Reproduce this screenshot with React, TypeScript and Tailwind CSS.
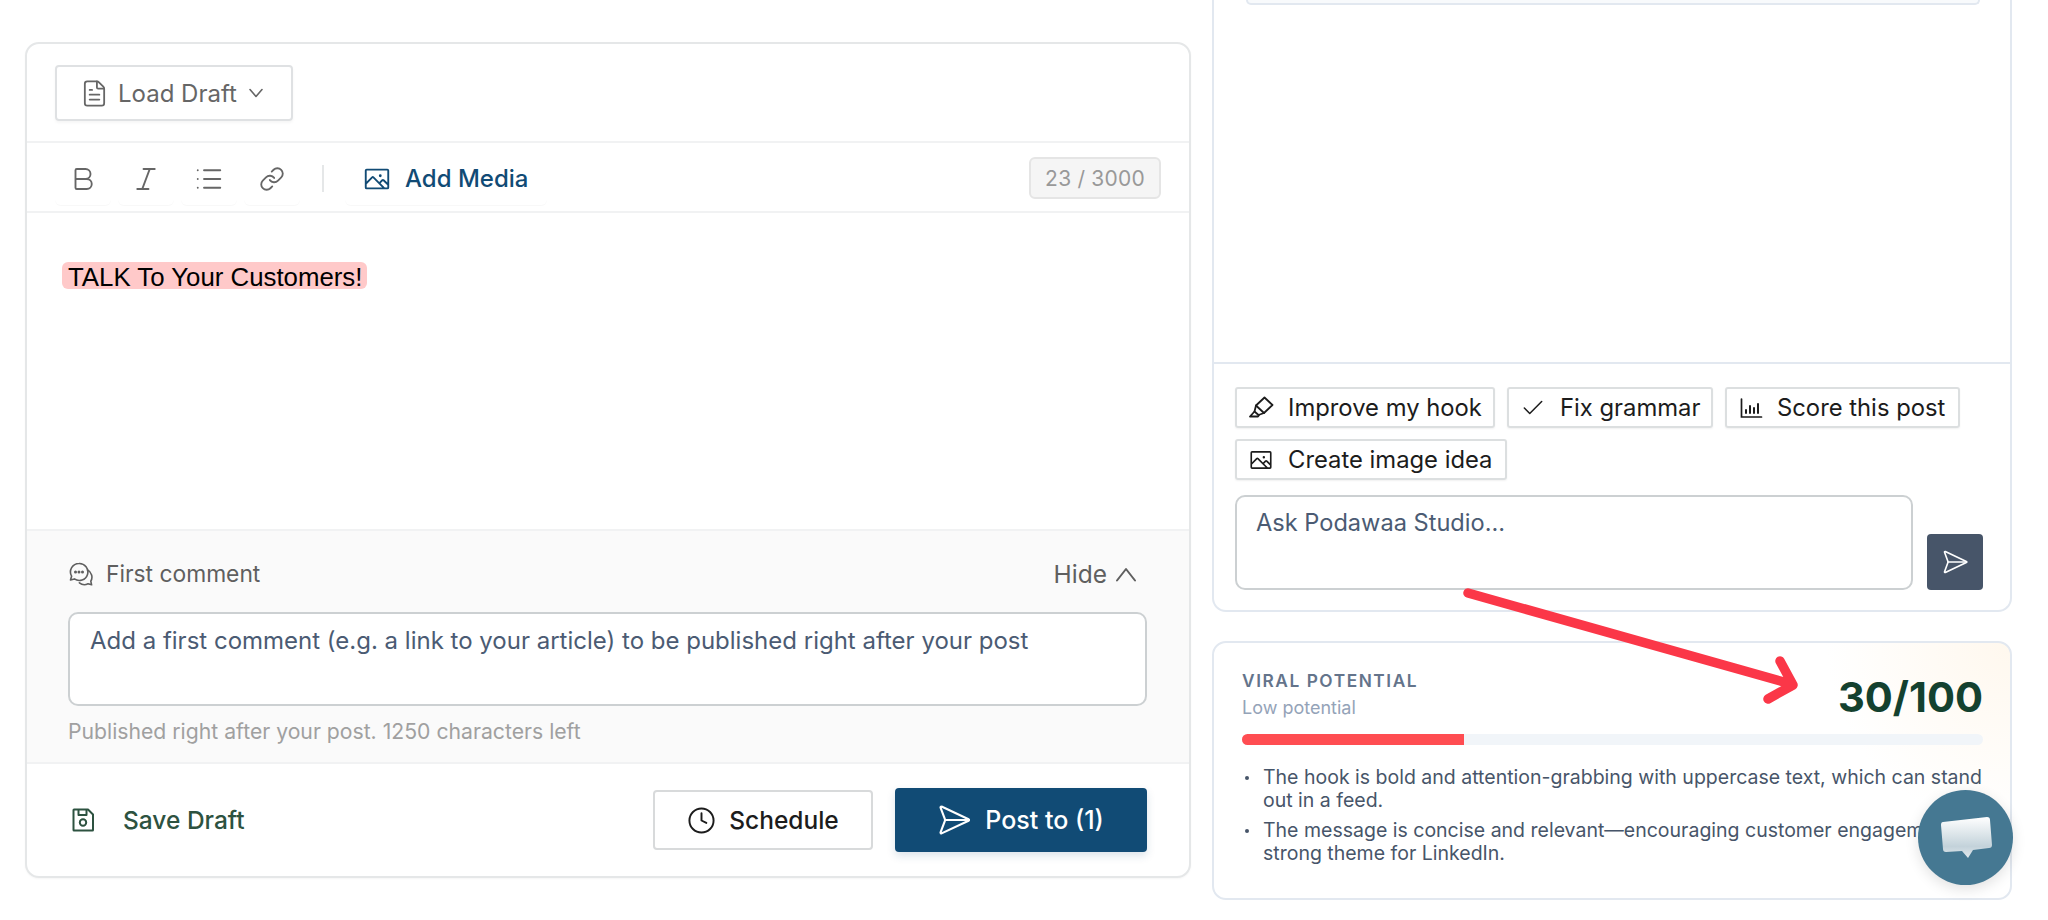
import { Bold, Check, Clock, FileText, Italic, Link, List, SendHorizontal } from "lucide-react";
import { PiImage } from "react-icons/pi";

function MarkerIcon() {
  return (
    <svg width="25" height="24" viewBox="0 0 25 24" fill="none" stroke="currentColor" strokeWidth="1.8" strokeLinecap="round" strokeLinejoin="round">
      <path d="M15.5 1.5 23.5 9l-8.5 8-8-7.5Z" />
      <path d="M7 9.5 5.5 15.5 9.5 19 15 17" />
      <path d="M5.5 15.5 1 20.5h8l1-1.5" />
    </svg>
  );
}

function ScoreIcon() {
  return (
    <svg width="24" height="24" viewBox="0 0 24 24" fill="none" stroke="currentColor" strokeWidth="1.7" strokeLinecap="round">
      <path d="M2.5 3v18h20" />
      <path d="M7 17v-3M11 17v-7M15 17v-5M19 17V8" strokeWidth="2" />
    </svg>
  );
}

function ChatsIcon() {
  return (
    <svg width="24" height="24" viewBox="0 0 24 24" fill="none" stroke="currentColor" strokeWidth="1.6" strokeLinecap="round" strokeLinejoin="round">
      <path d="M10 1.5a8.5 8.5 0 0 0-7.4 12.7L1.5 18l3.9-1.1A8.5 8.5 0 1 0 10 1.5Z" />
      <path d="M18.6 8a8 8 0 0 1 3.2 11.2l.8 3.6-3.6-1a8 8 0 0 1-8.6-1" />
      <circle cx="6.5" cy="10" r="0.7" fill="currentColor" />
      <circle cx="10" cy="10" r="0.7" fill="currentColor" />
      <circle cx="13.5" cy="10" r="0.7" fill="currentColor" />
    </svg>
  );
}

function SaveIcon() {
  return (
    <svg width="24" height="24" viewBox="0 0 24 24" fill="none" stroke="currentColor" strokeWidth="2" strokeLinejoin="round">
      <path d="M3 1.5h14l5 5V22a.5.5 0 0 1-.5.5H3a.5.5 0 0 1-.5-.5V2a.5.5 0 0 1 .5-.5Z" />
      <path d="M7.5 1.5V7h8V1.5" />
      <circle cx="12" cy="14.5" r="3.2" />
    </svg>
  );
}

const chips = [
  { label: "Improve my hook", icon: <MarkerIcon />, w: "w-[260px]", gap: "gap-[14px]" },
  { label: "Fix grammar", icon: <Check size={32} strokeWidth={1.4} />, w: "w-[206px]", gap: "gap-[14px]" },
  { label: "Score this post", icon: <ScoreIcon />, w: "w-[235px]", gap: "gap-[13px]" },
  { label: "Create image idea", icon: <PiImage size={28} />, w: "w-[272px]", gap: "gap-[14px]" },
];

function ToolButton({ children }: { children: React.ReactNode }) {
  return (
    <button className="flex h-[53px] w-[56px] items-center justify-center rounded-md text-[#666] shadow-[0_1px_1px_rgba(0,0,0,0.03)]">
      {children}
    </button>
  );
}

function EditorCard() {
  return (
    <section className="mt-[42px] flex h-[836px] w-[1166px] shrink-0 flex-col overflow-hidden rounded-[14px] border-2 border-[#e5e7e8] bg-white shadow-[0_1px_2px_rgba(0,0,0,0.04)]">
      <div className="flex h-[99px] items-start border-b-2 border-[#f1f2f3] pl-[28px] pt-[21px]">
        <button className="flex h-[56px] w-[238px] items-center rounded border-2 border-[#dfe1e3] pl-[23px] text-[24px] text-[#666] shadow-[0_2px_3px_rgba(0,0,0,0.04)]">
          <FileText size={29} strokeWidth={1.5} />
          <span className="ml-[9px] pt-[2px]">Load Draft</span>
          <svg className="ml-[12px]" width="14" height="10" viewBox="0 0 14 10" fill="none" stroke="currentColor" strokeWidth="1.6" strokeLinecap="round" strokeLinejoin="round">
            <path d="M1 1.5 7 8.5l6-7" />
          </svg>
        </button>
      </div>

      <div className="flex h-[70px] items-start border-b-2 border-[#f1f2f3] pl-[28px] pr-[28px] pt-[9px]">
        <div className="flex gap-[7px]">
          <ToolButton><Bold size={30} strokeWidth={1.5} /></ToolButton>
          <ToolButton><Italic size={30} strokeWidth={1.5} /></ToolButton>
          <ToolButton><List size={30} strokeWidth={1.5} /></ToolButton>
          <ToolButton><Link size={26} strokeWidth={1.7} /></ToolButton>
        </div>
        <div className="ml-[22px] mt-[13px] h-[27px] w-[2px] bg-[#e5e7e8]" />
        <button className="ml-[21px] flex h-[53px] w-[202px] items-center gap-[13px] rounded-md pl-[17px] text-[24px] font-medium text-[#114b75] shadow-[0_1px_1px_rgba(0,0,0,0.03)]">
          <PiImage size={30} />
          <span>Add Media</span>
        </button>
        <span className="ml-auto mt-[5px] flex h-[42px] w-[132px] items-center justify-center rounded-md border-2 border-[#e5e5e5] bg-[#f5f5f5] pt-[1px] text-[21px] tracking-[0.01em] text-[#999]">
          23 / 3000
        </span>
      </div>

      <div className="h-[316px] pl-[35px] pt-[49px]">
        <span className="block h-[27px] w-fit rounded-md bg-[#ffc9c9] pl-[6px] pr-[5px] font-['Liberation_Sans',sans-serif] text-[25.8px] leading-[31px] text-black">
          TALK To Your Customers!
        </span>
      </div>

      <div className="flex h-[235px] flex-col border-y-2 border-[#f1f2f3] bg-[#fafafa] pl-[41px] pr-[42px] pt-[28px]">
        <div className="flex h-[30px] items-center justify-between pl-[1px] pr-[11px] text-[#5f5f5f]">
          <div className="flex items-center gap-[13px] text-[22.8px]">
            <ChatsIcon />
            <span>First comment</span>
          </div>
          <div className="flex items-center gap-[9px] text-[24.5px]">
            <span>Hide</span>
            <svg width="20" height="15" viewBox="0 0 20 15" fill="none" stroke="currentColor" strokeWidth="2" strokeLinecap="round" strokeLinejoin="round">
              <path d="M1 13.5 10 2l9 11.5" />
            </svg>
          </div>
        </div>
        <div className="mt-[23px] h-[94px] rounded-[10px] border-2 border-[#ccd0d2] bg-white px-[20px] pt-[9px] text-[24px] leading-[36px] text-[#4b5b73]">
          Add a first comment (e.g. a link to your article) to be published right after your post
        </div>
        <p className="mt-[12px] text-[21.2px] leading-[26px] text-[#a0a0a0]">
          Published right after your post. 1250 characters left
        </p>
      </div>

      <div className="flex flex-1 items-center pl-[44px] pr-[42px]">
        <span className="text-[#2d5240]"><SaveIcon /></span>
        <span className="ml-[28px] text-[24.5px] font-medium text-[#2d5240]">Save Draft</span>
        <button className="ml-auto flex h-[60px] w-[220px] items-center justify-center gap-[13px] rounded border-2 border-[#d8dadb] bg-white text-[24.5px] font-medium text-[#1c1c1c]">
          <Clock size={29} strokeWidth={1.6} />
          <span>Schedule</span>
        </button>
        <button className="ml-[22px] flex h-[64px] w-[252px] items-center justify-center gap-[13px] rounded bg-[#114b75] pr-[2px] text-[25px] font-medium text-white shadow-[0_4px_8px_rgba(17,75,117,0.15)]">
          <SendHorizontal size={36} strokeWidth={1.4} />
          <span className="pt-[1px]">Post to (1)</span>
        </button>
      </div>
    </section>
  );
}

function AssistantCard() {
  return (
    <section className="flex h-[612px] flex-col rounded-b-[14px] border-2 border-t-0 border-[#e2e8f0] bg-white">
      <div className="h-[364px] border-b-2 border-[#e2e8f0] pl-[32px] pr-[30px]">
        <div className="h-[5px] rounded-b-[14px] border-2 border-t-0 border-[#e2e8f0] bg-[#f8fafc]" />
      </div>
      <div className="flex flex-wrap gap-x-[12px] gap-y-[11px] pl-[21px] pr-[21px] pt-[23px]">
        {chips.map((chip) => (
          <button
            key={chip.label}
            className={`flex h-[41px] ${chip.w} ${chip.gap} items-center rounded-[3px] border-2 border-[#dcdfe0] pl-[11px] text-[23.8px] text-[#1c1c1c] shadow-[0_1px_2px_rgba(0,0,0,0.06)]`}
          >
            <span className="flex w-[26px] shrink-0 justify-center">{chip.icon}</span>
            <span>{chip.label}</span>
          </button>
        ))}
      </div>
      <div className="mt-[15px] flex items-end gap-[14px] pl-[21px]">
        <div className="h-[95px] w-[678px] rounded-[10px] border-2 border-[#ccd0d2] pl-[19px] pt-[8px] text-[23.6px] leading-[36px] text-[#4b5b73]">
          Ask Podawaa Studio...
        </div>
        <button className="flex h-[56px] w-[56px] items-center justify-center rounded bg-[#475569] text-white">
          <SendHorizontal size={28} strokeWidth={1.4} />
        </button>
      </div>
    </section>
  );
}

function ViralCard() {
  return (
    <section className="mt-[29px] h-[259px] rounded-[14px] border-2 border-[#e2e8f0] bg-[radial-gradient(circle_at_100%_0%,#fff8ee_0%,#ffffff_22%)] pl-[28px] pr-[27px] pt-[27px]">
      <div className="flex items-start justify-between">
        <div>
          <div className="text-[17.3px] font-semibold leading-[22px] tracking-[0.09em] text-[#64748b]">VIRAL POTENTIAL</div>
          <div className="mt-[5px] text-[18px] leading-[22px] text-[#94a3b8]">Low potential</div>
        </div>
        <div className="mt-[2px] text-[41.6px] font-bold leading-[50px] text-[#14412f]">30/100</div>
      </div>
      <div className="mt-[12px] h-[11px] overflow-hidden rounded-full bg-[#f1f5f9]">
        <div className="h-full w-[30%] bg-[#ff4d52]" />
      </div>
      <ul className="mt-[21px] flex flex-col gap-[7px] text-[19.5px] leading-[23px] text-[#475569]">
        <li className="flex">
          <span className="ml-[3px] mr-[14px] mt-[10px] h-[4px] w-[4px] shrink-0 rounded-full bg-[#475569]" />
          <span>The hook is bold and attention-grabbing with uppercase text, which can stand out in a feed.</span>
        </li>
        <li className="flex">
          <span className="ml-[3px] mr-[14px] mt-[10px] h-[4px] w-[4px] shrink-0 rounded-full bg-[#475569]" />
          <span className="whitespace-nowrap">
            The message is concise and relevant—encouraging customer engagement is a
            <br />
            strong theme for LinkedIn.
          </span>
        </li>
      </ul>
    </section>
  );
}

export default function App() {
  return (
    <div className="relative h-[920px] w-[2048px] overflow-hidden bg-white font-['Inter',sans-serif]">
      <div className="flex items-start gap-[21px] pl-[25px]">
        <EditorCard />
        <div className="w-[800px]">
          <AssistantCard />
          <ViralCard />
        </div>
      </div>

      {/* annotation arrow drawn over the page */}
      <svg className="absolute left-0 top-0" width="2048" height="920" fill="none">
        <path
          d="M1468 593 L1791 684 M1780 661 L1793 685 L1768 699"
          stroke="#fb3748"
          strokeWidth="9.5"
          strokeLinecap="round"
          strokeLinejoin="round"
        />
      </svg>

      {/* chat launcher */}
      <button className="absolute left-[1918px] top-[790px] flex h-[95px] w-[95px] items-center justify-center rounded-full bg-[#457892] pt-[3px] shadow-[0_4px_14px_rgba(0,0,0,0.12)]">
        <svg width="56" height="48" viewBox="0 0 56 48">
          <defs>
            <linearGradient id="bubble" x1="0" y1="0" x2="0" y2="1">
              <stop offset="0" stopColor="#ffffff" />
              <stop offset="0.72" stopColor="#c3d2da" />
              <stop offset="1" stopColor="#e2e9ed" />
            </linearGradient>
          </defs>
          <path
            d="M5 7 L49 2 Q52 2 52 5 L54 30 Q54 33 51 33 L35 35 L30 43 L24 36 L8 37 Q5 37 5 34 L3 10 Q3 7 5 7 Z"
            fill="url(#bubble)"
          />
        </svg>
      </button>
    </div>
  );
}
